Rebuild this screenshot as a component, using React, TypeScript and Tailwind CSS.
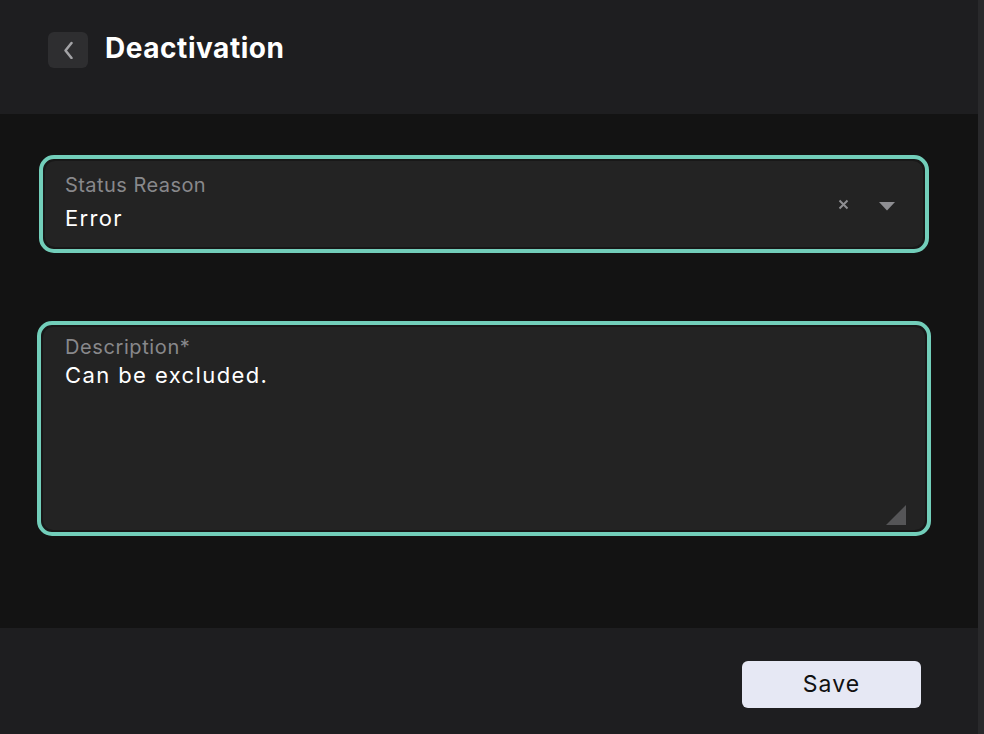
import React, { useState } from 'react';

const font = { fontFamily: 'Inter, "Noto Sans", sans-serif' };

const BackButton = () => (
  <button className="flex h-9 w-10 items-center justify-center rounded-md bg-[#2e2e30]">
    <svg width="12" height="18" viewBox="0 0 12 18" fill="none">
      <path d="M9.5 2 L3.5 9.5 L9.5 17" stroke="#a3a3a6" strokeWidth="2.5" strokeLinecap="round" strokeLinejoin="round" />
    </svg>
  </button>
);

const FocusFrame = ({ className, children }: { className: string; children: React.ReactNode }) => (
  <div className={`rounded-[15px] border-4 border-[#72ceba] bg-[#181818] p-[2px] ${className}`}>
    {children}
  </div>
);

const App = () => {
  const [reason, setReason] = useState('Error');
  const [description, setDescription] = useState('Can be excluded.');

  return (
    <div className="flex h-[734px] w-[984px] overflow-hidden bg-[#131313] text-white" style={font}>
      <div className="flex flex-1 flex-col">
        {/* Header */}
        <div className="flex h-[114px] items-start gap-[17px] bg-[#1e1e20] pl-12 pt-[32px]">
          <BackButton />
          <h1 className="mt-[-2px] text-[28px] font-bold leading-9 tracking-[0.55px]">Deactivation</h1>
        </div>

        {/* Body */}
        <div className="flex flex-1 flex-col bg-[#131313]">
          <FocusFrame className="ml-[39px] mt-[41px] w-[890px]">
            <div className="flex h-[86px] rounded-[10px] bg-[#232323] pl-[20px] pr-[28px]">
              <div className="flex flex-1 flex-col pt-[12px]">
                <span className="text-[20px] leading-6 tracking-[0.45px] text-[#88888b]">Status Reason</span>
                <span className="mt-[8px] text-[22px] leading-[26px] tracking-[1.3px] text-white">{reason}</span>
              </div>
              <button onClick={() => setReason('')} className="mr-[30px] flex items-center self-center">
                <svg width="11" height="11" viewBox="0 0 11 11">
                  <path d="M1.5 1.5 L9.5 9.5 M9.5 1.5 L1.5 9.5" stroke="#8e8e92" strokeWidth="2" />
                </svg>
              </button>
              <svg className="mt-[4px] self-center" width="16" height="9" viewBox="0 0 16 9">
                <path d="M0 0 H16 L8 8.5 Z" fill="#8e8e92" />
              </svg>
            </div>
          </FocusFrame>

          <FocusFrame className="ml-[37px] mt-[68px] w-[894px]">
            <div className="relative h-[203px] rounded-[10px] bg-[#232323] pl-[22px] pt-[8px]">
              <div className="text-[20px] leading-6 tracking-[0.6px] text-[#88888b]">Description*</div>
              <textarea
                value={description}
                onChange={e => setDescription(e.target.value)}
                className="mt-[3px] block h-[150px] w-full resize-none bg-transparent text-[22px] leading-[26px] tracking-[1.4px] text-white outline-none"
              />
              <svg className="absolute bottom-[5px] right-[19px]" width="20" height="20" viewBox="0 0 20 20">
                <path d="M20 0 V20 H0 Z" fill="#555557" />
              </svg>
            </div>
          </FocusFrame>
        </div>

        {/* Footer */}
        <div className="flex h-[106px] items-start justify-end bg-[#1e1e20] pr-[57px] pt-[33px]">
          <button className="h-[47px] w-[179px] rounded-md bg-[#e6e8f4] text-[23px] tracking-[1.1px] text-[#111]">Save</button>
        </div>
      </div>
      <div className="w-[6px] bg-[#29292b]" />
    </div>
  );
};

export default App;
